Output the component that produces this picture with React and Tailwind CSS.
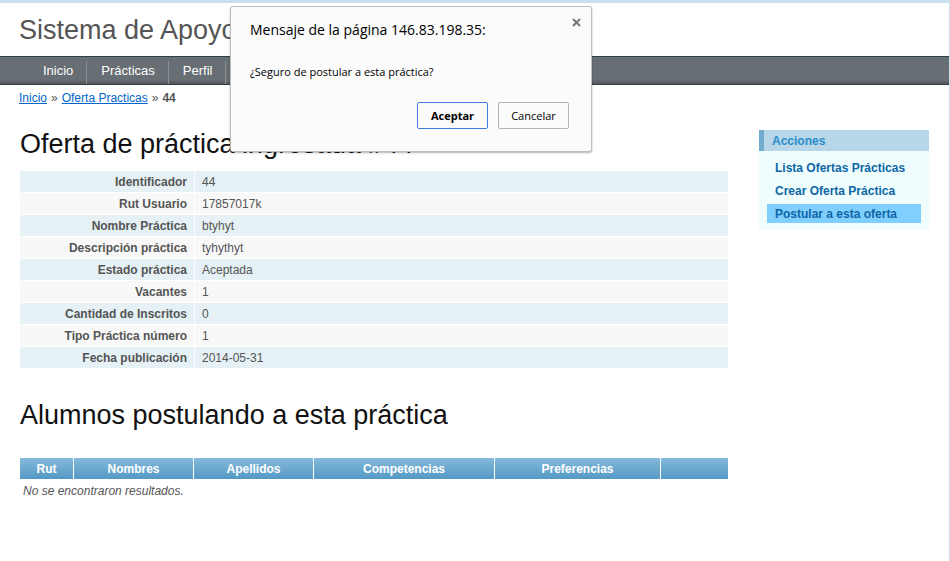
const details = [
  ["Identificador", "44"],
  ["Rut Usuario", "17857017k"],
  ["Nombre Práctica", "btyhyt"],
  ["Descripción práctica", "tyhythyt"],
  ["Estado práctica", "Aceptada"],
  ["Vacantes", "1"],
  ["Cantidad de Inscritos", "0"],
  ["Tipo Práctica número", "1"],
  ["Fecha publicación", "2014-05-31"],
];

const columns = [
  { label: "Rut", width: "w-[54px]" },
  { label: "Nombres", width: "w-[120px]" },
  { label: "Apellidos", width: "w-[120px]" },
  { label: "Competencias", width: "w-[181px]" },
  { label: "Preferencias", width: "w-[166px]" },
  { label: "", width: "" },
];

const actions = [
  { label: "Lista Ofertas Prácticas", active: false },
  { label: "Crear Oferta Práctica", active: false },
  { label: "Postular a esta oferta", active: true },
];

function Nav() {
  return (
    <nav className="h-[29px] border-y border-[#2c404b] bg-linear-to-b from-[#676e74] from-85% to-[#555659] pl-[29px]">
      <ul className="flex h-full items-end">
        {["Inicio", "Prácticas", "Perfil"].map((item) => (
          <li key={item} className="border-r border-[#8f8f8f]">
            <a href="#" className="block pr-[13px] pl-[14px] pb-[3px] text-[13px] leading-5 text-white">{item}</a>
          </li>
        ))}
      </ul>
    </nav>
  );
}

function Breadcrumbs() {
  return (
    <div className="flex gap-1 px-[19px] pt-[5px] text-[12px] leading-4">
      <a href="#" className="text-[#0066cc] underline">Inicio</a>
      <span>»</span>
      <a href="#" className="text-[#0066cc] underline">Oferta Practicas</a>
      <span>»</span>
      <span className="font-bold">44</span>
    </div>
  );
}

function Details() {
  return (
    <table className="w-full border-separate border-spacing-0 text-[12px] leading-4">
      <tbody>
        {details.map(([label, value]) => (
          <tr key={label} className="h-[22px] odd:bg-[#e5f1f4] even:bg-[#f8f8f8]">
            <th scope="row" className="w-[175px] border-r border-b border-white pr-[7px] text-right font-bold">{label}</th>
            <td className="border-b border-white pl-[7px]">{value}</td>
          </tr>
        ))}
      </tbody>
    </table>
  );
}

function Results() {
  return (
    <table className="w-full table-fixed border-separate border-spacing-0 text-[12px] leading-4">
      <thead>
        <tr>
          {columns.map((c, i) => (
            <th
              key={i}
              scope="col"
              className={`${c.width} h-[21px] border-r border-white bg-linear-to-b from-[#86bada] to-[#5399c5] bg-clip-padding text-center font-bold text-white last:border-r-0`}
            >
              {c.label}
            </th>
          ))}
        </tr>
      </thead>
      <tbody>
        <tr>
          <td colSpan={6} className="h-6 pl-[3px] italic">No se encontraron resultados.</td>
        </tr>
      </tbody>
    </table>
  );
}

function Sidebar() {
  return (
    <aside className="mt-6 w-[170px] shrink-0 text-[12px] font-bold">
      <h2 className="h-[21px] border-l-[5px] border-[#6faccf] bg-[#b7d6e7] pl-2 leading-[22px] text-[#298dcd]">Acciones</h2>
      <ul className="flex flex-col gap-1 bg-[#effdff] px-2 py-[7px]">
        {actions.map((a) => (
          <li key={a.label}>
            <a
              href="#"
              className={`block h-[19px] pl-2 leading-5 whitespace-nowrap text-[#0d66a5] ${a.active ? "bg-[#80cfff]" : ""}`}
            >
              {a.label}
            </a>
          </li>
        ))}
      </ul>
    </aside>
  );
}

function ConfirmDialog() {
  return (
    <div
      role="dialog"
      aria-labelledby="dialog-title"
      className="absolute top-[3px] left-[230px] w-[362px] rounded-[3px] border border-[#bcbcbc] bg-[#fbfbfb] pt-[13px] pr-[22px] pb-[22px] pl-[19px] font-['Open_Sans','Noto_Sans',sans-serif] text-black shadow-[0_1px_2px_rgba(0,0,0,0.3)]"
    >
      <button type="button" aria-label="Cerrar" className="absolute top-[11px] right-[10px]">
        <svg width="9" height="9" viewBox="0 0 9 9" fill="none" stroke="#777" strokeWidth="2">
          <path d="M1 1l7 7M8 1l-7 7" />
        </svg>
      </button>
      <h2 id="dialog-title" className="text-[14px] leading-5">Mensaje de la página 146.83.198.35:</h2>
      <p className="mt-6 text-[11px] leading-4">¿Seguro de postular a esta práctica?</p>
      <div className="mt-[22px] flex justify-end gap-[10px] text-[11px] leading-4">
        <button type="button" className="h-[27px] w-[71px] rounded-[2px] border border-[#4079e0] bg-[#fbfbfb] font-bold">Aceptar</button>
        <button type="button" className="h-[27px] w-[71px] rounded-[2px] border border-[#b4b4b4] bg-[#fbfbfb]">Cancelar</button>
      </div>
    </div>
  );
}

export default function App() {
  return (
    <div className="relative min-h-screen border-t-[3px] border-r border-[#c9e0ed] bg-white font-['Liberation_Sans',Arial,sans-serif] text-[#555]">
      <header className="h-[53px] px-[19px] pt-[11px] text-[27px] leading-8">Sistema de Apoyo</header>
      <Nav />
      <Breadcrumbs />
      <div className="flex gap-[31px] px-5">
        <main className="min-w-0 flex-1">
          <h1 className="pt-[22px] pb-[11px] text-[27px] leading-8 text-[#111]">Oferta de práctica ingresada #44</h1>
          <Details />
          <h1 className="pt-[30px] pb-[27px] text-[27px] leading-8 text-[#111]">Alumnos postulando a esta práctica</h1>
          <Results />
        </main>
        <Sidebar />
      </div>
      <ConfirmDialog />
    </div>
  );
}
